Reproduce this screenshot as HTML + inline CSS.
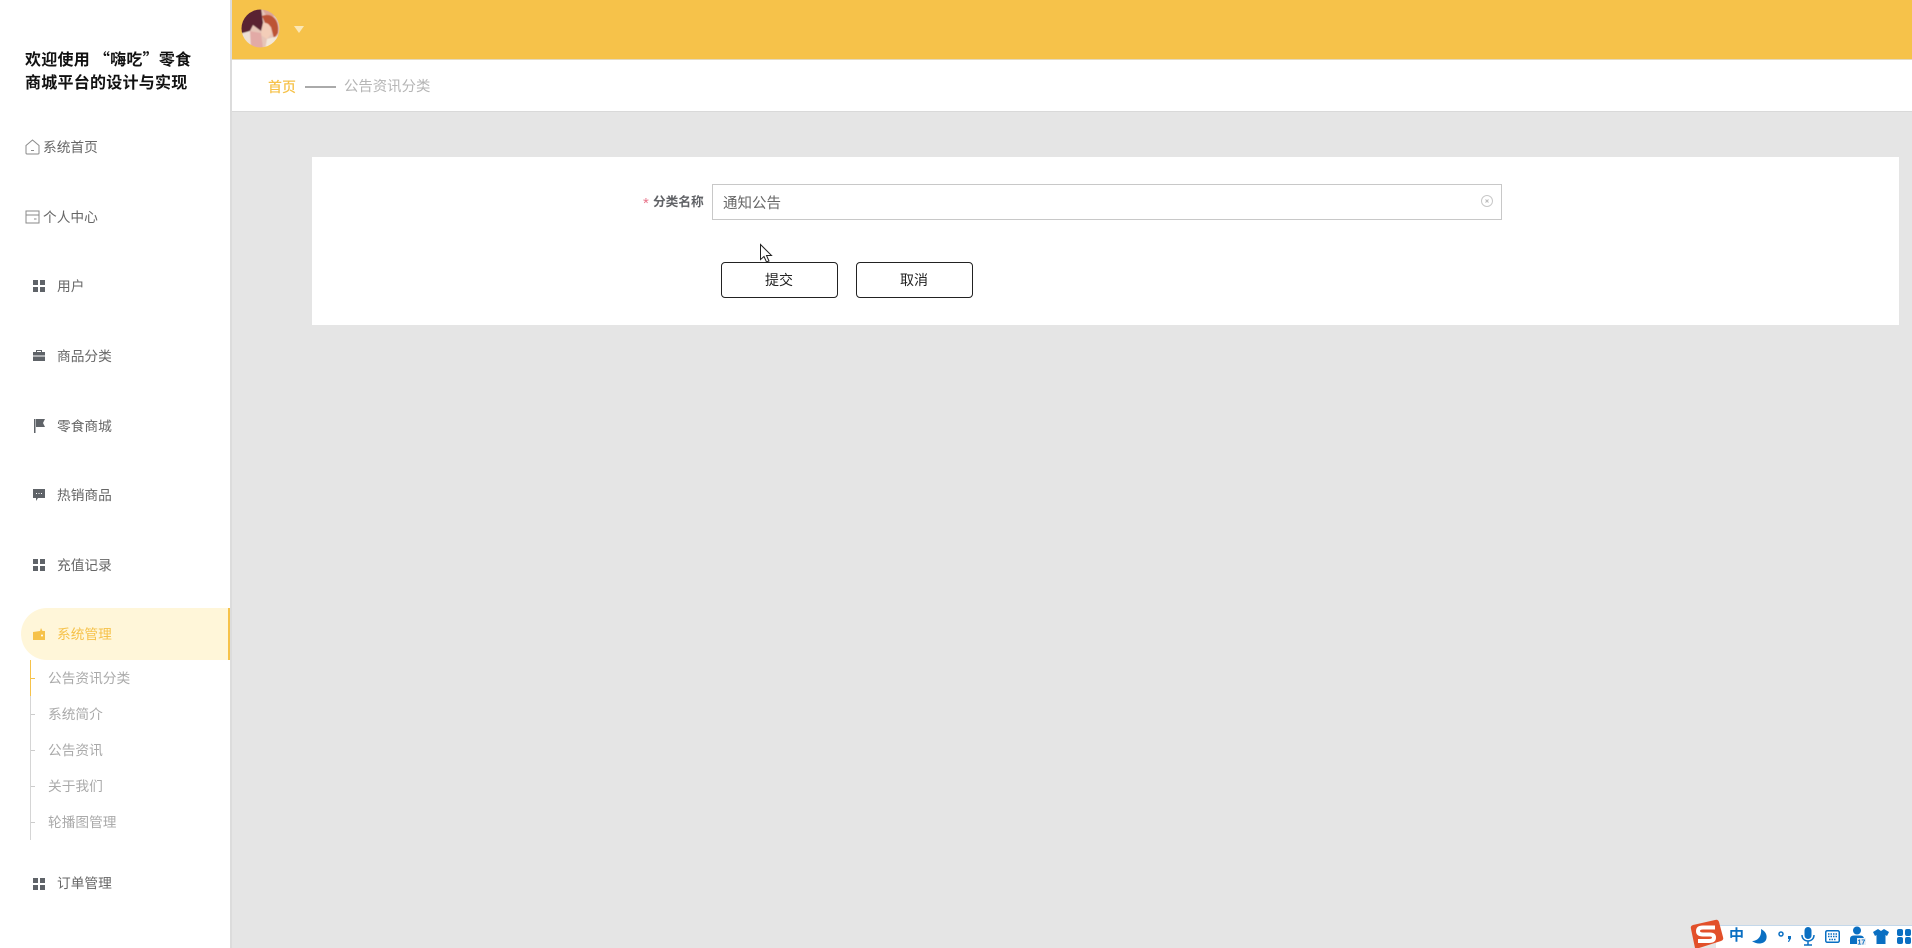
<!DOCTYPE html>
<html lang="zh-CN">
<head>
<meta charset="utf-8">
<title>公告资讯分类</title>
<style>
html,body{margin:0;padding:0;width:1912px;height:948px;overflow:hidden;background:#e5e5e5;}
body{position:relative;font-family:"Liberation Sans","Noto Sans CJK SC","WenQuanYi Zen Hei",sans-serif;}
.a{position:absolute;white-space:nowrap;}
.t{position:absolute;white-space:nowrap;line-height:20px;height:20px;}
svg{position:absolute;display:block;overflow:visible;}
.menu{font-size:13.7px;color:#666;}
.sub{font-size:13.7px;color:#aaa;left:48px;}
.tick{position:absolute;left:31px;width:4px;height:1px;background:#ccc;}
.q{font-family:"Noto Sans CJK SC",sans-serif;}
</style>
</head>
<body>
<div class="a" style="left:0;top:0;width:230px;height:948px;background:#fff;"></div>
<div class="a" style="left:230px;top:0;width:2px;height:948px;background:#dcdcdc;"></div>

<div class="a" style="left:232px;top:0;width:1680px;height:59px;background:#f6c24a;"></div>
<div class="a" style="left:232px;top:59px;width:1680px;height:1px;background:#e3d9bf;"></div>
<div class="a" style="left:232px;top:60px;width:1680px;height:51px;background:#fff;"></div>
<div class="a" style="left:232px;top:111px;width:1680px;height:1px;background:#d9d9d9;"></div>

<svg style="left:241px;top:9px;" width="39" height="39" viewBox="0 0 39 39">
<defs>
<clipPath id="c"><circle cx="19.500" cy="19.500" r="19"/></clipPath>
<filter id="b" x="-10%" y="-10%" width="120%" height="120%"><feGaussianBlur stdDeviation="0.500"/></filter>
</defs>
<g clip-path="url(#c)"><g filter="url(#b)">
<rect width="39" height="39" fill="#e6c5b8"/>
<path d="M-2 -2H20L22 14L20 22L12 16L8 24L-2 26Z" fill="#5a2030"/>
<path d="M20 -2H34L39 6L26 8Z" fill="#dca596"/>
<path d="M21 7C30 3 39 10 37 24L33 30L30 18L24 14Z" fill="#bd5236"/>
<path d="M22 14C28 13 31 18 30 25L26 30L20 26Z" fill="#f3cdb8"/>
<path d="M8 22L20 24L22 39H8Z" fill="#e2aaa6"/>
<path d="M-2 25L9 22L10 39H-2Z" fill="#eee0d5"/>
<path d="M26 30L41 26V41H24Z" fill="#f3e7da"/>
</g></g>
</svg>
<svg style="left:294px;top:26px;" width="10" height="7" viewBox="0 0 10 7"><path d="M0 0H10L5 7Z" fill="#fbe7b5"/></svg>

<div class="t" style="left:25px;top:48px;font-size:16px;font-weight:700;color:#111;letter-spacing:.25px;"><span class="q">欢迎使用 “嗨吃”零食</span></div>
<div class="t" style="left:25px;top:74px;font-size:16px;font-weight:700;color:#111;letter-spacing:.25px;">商城平台的设计与实现</div>

<svg style="left:25px;top:139px;" width="15" height="16" viewBox="0 0 15 16"><path d="M1 6.500L7.500 1L14 6.500V14A1 1 0 0 1 13 15H2A1 1 0 0 1 1 14ZM6 11.500H9" fill="none" stroke="#8a8a8a" stroke-width="1"/></svg>
<div class="t menu" style="left:43px;top:138px;">系统首页</div>
<svg style="left:25px;top:210px;" width="15" height="14" viewBox="0 0 15 14"><path d="M1 1H14V13H1ZM1 5H14M9 9H11.500" fill="none" stroke="#8a8a8a" stroke-width="1"/></svg>
<div class="t menu" style="left:43px;top:208px;">个人中心</div>

<svg style="left:33px;top:280px;" width="12" height="12" viewBox="0 0 12 12"><path d="M0 0H5V5H0ZM7 0H12V5H7ZM0 7H5V12H0ZM7 7H12V12H7Z" fill="#5f6368"/></svg>
<div class="t menu" style="left:57px;top:277px;">用户</div>

<svg style="left:33px;top:349px;" width="12" height="12" viewBox="0 0 12 12"><path d="M3 3V1H9V3H8V2H4V3ZM0 3H12V6.500H0ZM0 7.500H12V12H0Z" fill="#5f6368"/></svg>
<div class="t menu" style="left:57px;top:347px;">商品分类</div>

<svg style="left:34px;top:419px;" width="12" height="14" viewBox="0 0 12 14"><path d="M0 0H1.500V14H0ZM2 0H11L9 4L11 8H2Z" fill="#5f6368"/></svg>
<div class="t menu" style="left:57px;top:417px;">零食商城</div>

<svg style="left:33px;top:489px;" width="12" height="12" viewBox="0 0 12 12"><path d="M0 0H12V9H5L3 12V9H0Z" fill="#5f6368"/><path d="M3 4H4V5H3ZM5.500 4H6.500V5H5.500ZM8 4H9V5H8Z" fill="#fff"/></svg>
<div class="t menu" style="left:57px;top:486px;">热销商品</div>

<svg style="left:33px;top:559px;" width="12" height="12" viewBox="0 0 12 12"><path d="M0 0H5V5H0ZM7 0H12V5H7ZM0 7H5V12H0ZM7 7H12V12H7Z" fill="#5f6368"/></svg>
<div class="t menu" style="left:57px;top:556px;">充值记录</div>

<div class="a" style="left:21px;top:608px;width:207px;height:52px;background:#fff6d9;border-radius:26px 0 0 26px;border-right:2px solid #f6c24a;"></div>
<svg style="left:33px;top:628px;" width="12" height="12" viewBox="0 0 12 12"><path d="M0 4L7 3L8 0L9.500 3H12V12H0Z" fill="#f6c24a"/><circle cx="9" cy="7.500" r="1" fill="#fff"/></svg>
<div class="t menu" style="left:57px;top:625px;color:#f6c24a;">系统管理</div>

<div class="a" style="left:30px;top:660px;width:1px;height:180px;background:#d5d5d5;"></div>
<div class="a" style="left:30px;top:660px;width:1px;height:36px;background:#f6c24a;"></div>
<div class="tick" style="top:678px;background:#f6c24a;"></div>
<div class="tick" style="top:714px;"></div>
<div class="tick" style="top:750px;"></div>
<div class="tick" style="top:786px;"></div>
<div class="tick" style="top:822px;"></div>
<div class="t sub" style="top:669px;">公告资讯分类</div>
<div class="t sub" style="top:705px;">系统简介</div>
<div class="t sub" style="top:741px;">公告资讯</div>
<div class="t sub" style="top:777px;">关于我们</div>
<div class="t sub" style="top:813px;">轮播图管理</div>

<svg style="left:33px;top:878px;" width="12" height="12" viewBox="0 0 12 12"><path d="M0 0H5V5H0ZM7 0H12V5H7ZM0 7H5V12H0ZM7 7H12V12H7Z" fill="#5f6368"/></svg>
<div class="t menu" style="left:57px;top:874px;">订单管理</div>

<div class="t" style="left:268px;top:77px;font-size:14px;color:#f6c24a;font-weight:500;">首页</div>
<div class="a" style="left:305px;top:86px;width:31px;height:2px;background:#aaa;"></div>
<div class="t" style="left:344px;top:77px;font-size:14.400px;color:#b5b5b5;">公告资讯分类</div>

<div class="a" style="left:312px;top:157px;width:1587px;height:168px;background:#fff;"></div>

<div class="t" style="left:643px;top:194px;font-size:15px;color:#e8748a;">*</div>
<div class="t" style="left:653px;top:192px;font-size:12.700px;font-weight:700;color:#606266;">分类名称</div>
<div class="a" style="left:712px;top:184px;width:788px;height:34px;border:1px solid #c8c8c8;background:#fff;"></div>
<div class="t" style="left:723px;top:194px;font-size:14.500px;color:#666;">通知公告</div>
<svg style="left:1481px;top:195px;" width="12" height="12" viewBox="0 0 12 12"><circle cx="6" cy="6" r="5.500" fill="none" stroke="#c8c8c8"/><path d="M4.500 4.500L7.500 7.500M7.500 4.500L4.500 7.500" stroke="#bbb"/></svg>

<div class="a" style="left:721px;top:262px;width:115px;height:34px;border:1px solid #222;border-radius:4px;background:#fff;"></div>
<div class="t" style="left:765px;top:270px;font-size:14px;color:#222;">提交</div>
<div class="a" style="left:856px;top:262px;width:115px;height:34px;border:1px solid #222;border-radius:4px;background:#fff;"></div>
<div class="t" style="left:900px;top:270px;font-size:14px;color:#222;">取消</div>

<svg style="left:760px;top:244px;" width="13" height="19" viewBox="0 0 13 19"><path d="M0.500 0.500V15.500L4 12.500L6.500 18L9 17L6.500 11.500H11.500Z" fill="#fff" stroke="#222" stroke-width="1"/></svg>

<div class="a" style="left:1716px;top:925px;width:196px;height:23px;background:#fff;border-top:1px solid #c4d8ea;box-sizing:border-box;"></div>
<svg style="left:1690px;top:919px;" width="34" height="29" viewBox="0 0 34 29"><path d="M1 10Q0 7 3 6L25 1Q28 0 29 3L33 18Q34 21 31 22L9 29H5Z" fill="#e2502a"/><path d="M25 8.500H13Q8 8.500 8 12Q8 15.500 13 15.500H20Q24 15.500 24 18.500Q24 22 19 22H8" fill="none" stroke="#fff" stroke-width="4"/></svg>
<div class="t" style="left:1729px;top:926px;font-size:15px;font-weight:700;color:#0a6fc2;">中</div>
<svg style="left:1752px;top:929px;" width="16" height="16" viewBox="0 0 16 16"><path d="M9 0C13 2 16 6 14 11C12 15 5 16 0 12C5 12 10 8 9 0Z" fill="#0a6fc2"/></svg>
<svg style="left:1778px;top:931px;" width="14" height="12" viewBox="0 0 14 12"><circle cx="3" cy="3" r="2" fill="none" stroke="#0a6fc2" stroke-width="1.500"/><path d="M10 5H13V7.500L11 11H10L11 8H10Z" fill="#0a6fc2"/></svg>
<svg style="left:1801px;top:927px;" width="14" height="19" viewBox="0 0 14 19"><rect x="3.500" y="0" width="7" height="12" rx="3.500" fill="#0a6fc2"/><path d="M1 8C1 16 13 16 13 8M7 14V18M3 18H11" fill="none" stroke="#0a6fc2" stroke-width="1.500"/></svg>
<svg style="left:1825px;top:930px;" width="15" height="13" viewBox="0 0 15 13"><rect x="0.750" y="0.750" width="13.500" height="11.500" rx="1.500" fill="#fff" stroke="#0a6fc2" stroke-width="1.500"/><path d="M3 4H12M3 6.500H12M4 9.500H11" stroke="#0a6fc2" stroke-width="1.500" stroke-dasharray="1.500 1"/></svg>
<svg style="left:1850px;top:926px;" width="16" height="19" viewBox="0 0 16 19"><circle cx="7" cy="4.500" r="4" fill="#0a6fc2"/><path d="M0 18V13Q0 9.500 4 9.500H10Q14 9.500 14 13V18Z" fill="#0a6fc2"/><rect x="7" y="12" width="9" height="7" fill="#e8eef4"/><text x="7.500" y="18.500" font-size="7" font-weight="700" fill="#0a6fc2" font-family="Liberation Sans">17</text></svg>
<svg style="left:1873px;top:929px;" width="16" height="15" viewBox="0 0 16 15"><path d="M5 0L8 2L11 0L16 3L14 7L12.500 6V15H3.500V6L2 7L0 3Z" fill="#0a6fc2"/></svg>
<svg style="left:1897px;top:929px;" width="14" height="15" viewBox="0 0 14 15"><rect x="0" y="0" width="6" height="7" rx="2" fill="#0a6fc2"/><rect x="8" y="0" width="6" height="7" rx="2" fill="#0a6fc2"/><rect x="0" y="8" width="6" height="7" rx="2" fill="#0a6fc2"/><rect x="8" y="8" width="6" height="7" rx="2" fill="#0a6fc2"/></svg>
</body>
</html>
